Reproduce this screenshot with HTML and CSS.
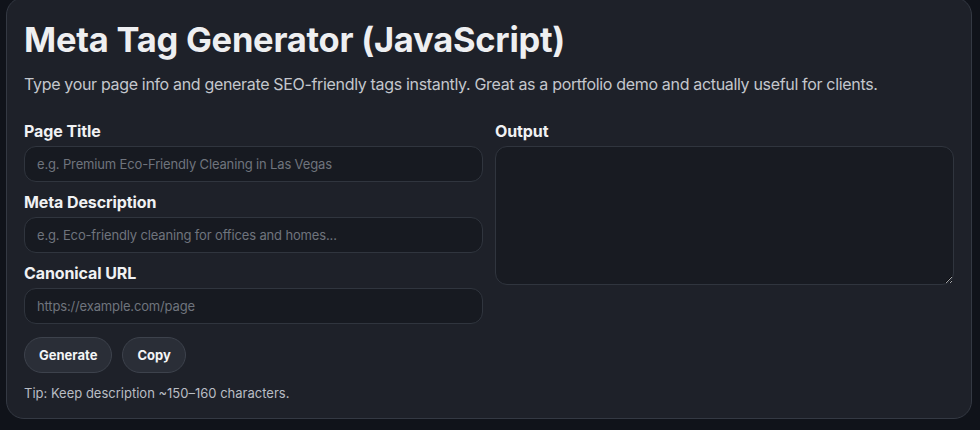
FILE: index.html
```html
<!DOCTYPE html>
<html lang="en">
<head>
<meta charset="utf-8">
<title>Meta Tag Generator</title>
<link rel="stylesheet" href="styles.css">
</head>
<body>
<main class="card">
  <h1 class="title">Meta Tag Generator (JavaScript)</h1>
  <p class="lead">Type your page info and generate SEO-friendly tags instantly. Great as a portfolio demo and actually useful for clients.</p>
  <div class="grid">
    <div class="col">
      <label class="label" for="t">Page Title</label>
      <input class="field" id="t" type="text" placeholder="e.g. Premium Eco-Friendly Cleaning in Las Vegas">
      <label class="label" for="d">Meta Description</label>
      <input class="field" id="d" type="text" placeholder="e.g. Eco-friendly cleaning for offices and homes...">
      <label class="label" for="u">Canonical URL</label>
      <input class="field" id="u" type="text" placeholder="https://example.com/page">
      <div class="actions">
        <button class="btn" type="button">Generate</button>
        <button class="btn" type="button">Copy</button>
      </div>
      <p class="tip">Tip: Keep description ~150–160 characters.</p>
    </div>
    <div class="col">
      <label class="label" for="o">Output</label>
      <textarea class="output" id="o"></textarea>
    </div>
  </div>
</main>
</body>
</html>
```
FILE: styles.css
```css
* { box-sizing: border-box; }
html, body { margin: 0; padding: 0; }
body {
  background: #10131a;
  font-family: Inter, "Noto Sans", sans-serif;
  color: #e9eaec;
  padding: 0 8px 0 6px;
}
.card {
  margin-top: -3px;
  background: #1e2129;
  border: 1px solid #343943;
  border-radius: 18px;
  padding: 20px 17px 17px;
}
.title {
  margin: 0;
  font-size: 34.5px;
  line-height: 44px;
  font-weight: 700;
  color: #eeeff1;
  letter-spacing: -0.25px;
}
.lead {
  margin: 11px 0 0;
  font-size: 16px;
  line-height: 22px;
  color: #c4c7cd;
  letter-spacing: -0.33px;
}
.grid {
  margin-top: 26px;
  display: grid;
  grid-template-columns: 1fr 1fr;
  gap: 12px;
}
.col { display: flex; flex-direction: column; }
.label {
  font-size: 16px;
  line-height: 20px;
  font-weight: 700;
  color: #f0f1f3;
  margin-bottom: 5px;
  letter-spacing: -0.1px;
}
.field {
  height: 36px;
  background: #171a21;
  border: 1px solid #30353e;
  border-radius: 12px;
  padding: 0 12px;
  font-family: inherit;
  font-size: 13px;
  letter-spacing: -0.15px;
  color: #e9eaec;
  margin-bottom: 10px;
  outline: none;
}
.field::placeholder { color: #6f747d; }
.actions {
  display: flex;
  gap: 10px;
  margin-top: 3px;
}
.btn {
  height: 36px;
  padding: 0 14px;
  border-radius: 18px;
  border: 1px solid #3d424c;
  background: #2a2e37;
  color: #f4f5f6;
  font-family: inherit;
  font-size: 13px;
  font-weight: 700;
}
.tip {
  margin: 12px 0 0;
  font-size: 13px;
  line-height: 16px;
  color: #b9bdc4;
}
.output {
  height: 139px;
  background: #181b22;
  border: 1px solid #30353e;
  border-radius: 12px;
  resize: vertical;
  outline: none;
}
```
